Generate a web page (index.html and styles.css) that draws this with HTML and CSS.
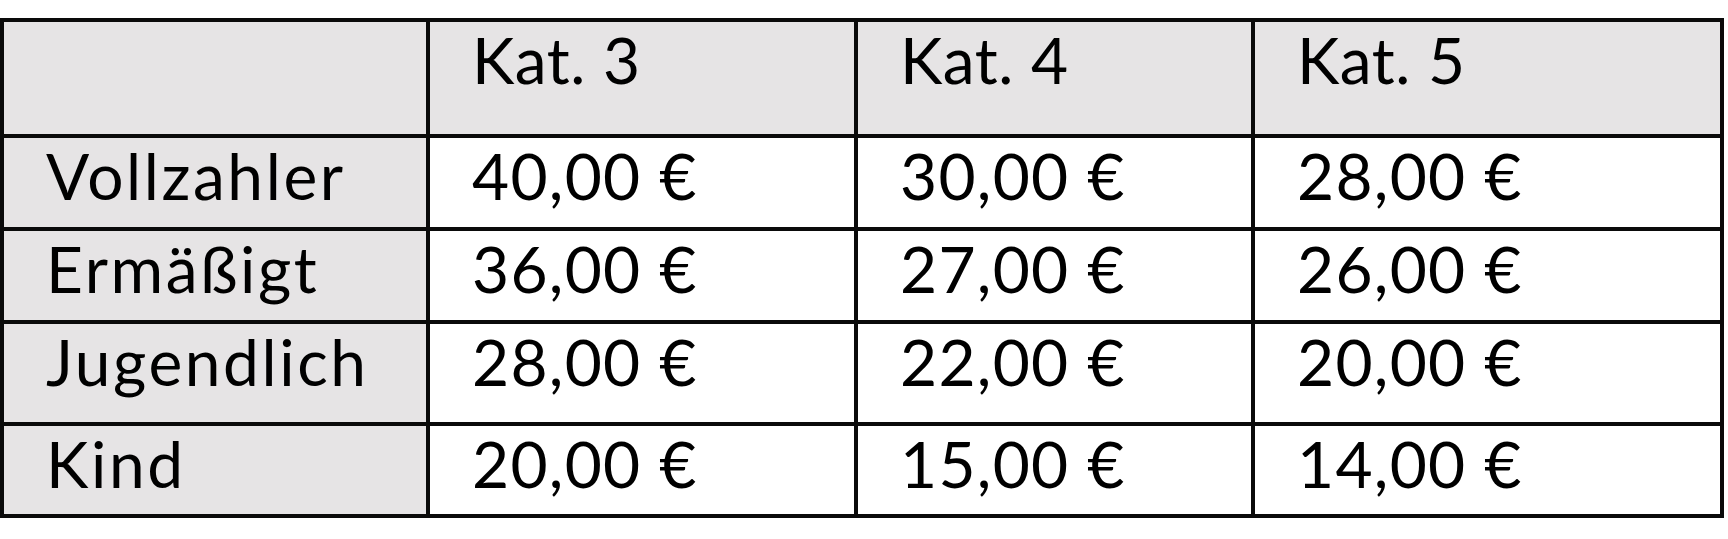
FILE: index.html
```html
<!DOCTYPE html>
<html lang="de">
<head>
<meta charset="utf-8">
<title>Preise</title>
<link rel="stylesheet" href="styles.css">
</head>
<body>
<div class="price-table" role="table">
  <div class="cell head" role="columnheader"></div>
  <div class="cell head" role="columnheader">Kat. 3</div>
  <div class="cell head" role="columnheader">Kat. 4</div>
  <div class="cell head" role="columnheader">Kat. 5</div>

  <div class="cell label" role="rowheader">Vollzahler</div>
  <div class="cell" role="cell">40,00 €</div>
  <div class="cell" role="cell">30,00 €</div>
  <div class="cell" role="cell">28,00 €</div>

  <div class="cell label" role="rowheader">Ermäßigt</div>
  <div class="cell" role="cell">36,00 €</div>
  <div class="cell" role="cell">27,00 €</div>
  <div class="cell" role="cell">26,00 €</div>

  <div class="cell label" role="rowheader">Jugendlich</div>
  <div class="cell" role="cell">28,00 €</div>
  <div class="cell" role="cell">22,00 €</div>
  <div class="cell" role="cell">20,00 €</div>

  <div class="cell label" role="rowheader">Kind</div>
  <div class="cell" role="cell">20,00 €</div>
  <div class="cell" role="cell">15,00 €</div>
  <div class="cell" role="cell">14,00 €</div>
</div>
</body>
</html>
```

FILE: styles.css
```css
html, body {
  margin: 0;
  padding: 0;
  background: #ffffff;
}

body {
  padding-top: 18px;
  font-family: "Lato", "Noto Sans", sans-serif;
  color: #000000;
}

.price-table {
  display: grid;
  grid-template-columns: 422px 424px 393px 465px;
  grid-template-rows: 112px 89px 89px 98px 88px;
  gap: 4px;
  padding: 4px;
  width: max-content;
  background: #0a0a0a;
}

.cell {
  background: #ffffff;
  font-size: 64px;
  line-height: 1.2;
  padding: 0 0 0 42px;
  letter-spacing: 1.3px;
  white-space: nowrap;
}

.head {
  background: #e6e4e5;
  letter-spacing: 0.6px;
}

.label {
  background: #e6e4e5;
  letter-spacing: 2.6px;
}
```
